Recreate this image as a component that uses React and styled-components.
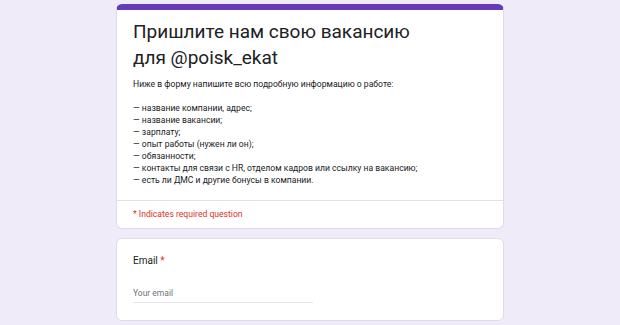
import React from 'react';
import styled, { createGlobalStyle } from 'styled-components';

const GlobalStyle = createGlobalStyle`
  html, body {
    margin: 0;
    padding: 0;
    background: #efebf8;
    font-family: Roboto, 'Noto Sans', Arial, sans-serif;
  }
`;

const Page = styled.div`
  display: flex;
  flex-direction: column;
  align-items: center;
  gap: 9px;
  padding-top: 4px;
`;

const Card = styled.div`
  width: 388px;
  background: #fff;
  border-radius: 6px;
  border: 1px solid #dfdce6;
  box-sizing: border-box;
  overflow: hidden;
  border-top: ${p => (p.$accent ? '6px solid #673ab7' : '1px solid #dfdce6')};
`;

const Header = styled.div`
  padding: 9px 16px 14px;
  border-bottom: 1px solid #e3e1e8;
`;

const Title = styled.h1`
  margin: 0 0 7px;
  font-size: 19px;
  font-weight: 400;
  line-height: 26px;
  color: #202124;
`;

const Description = styled.div`
  font-size: 8.6px;
  line-height: 12px;
  color: #202124;
  white-space: pre-line;
`;

const Required = styled.div`
  padding: 7px 16px 8px;
  font-size: 8.6px;
  line-height: 12px;
  color: #d93025;
`;

const Question = styled.div`
  padding: 15px 16px 17px;
`;

const Label = styled.div`
  font-size: 10px;
  line-height: 14px;
  color: #202124;
  span {
    color: #d93025;
  }
`;

const Input = styled.input`
  display: block;
  margin-top: 19px;
  width: 180px;
  border: none;
  border-bottom: 1px solid #e6e4ea;
  padding: 0 0 3px;
  font-family: inherit;
  font-size: 8.5px;
  line-height: 12px;
  color: #202124;
  outline: none;
  &::placeholder {
    color: #70757a;
  }
`;

const description = `Ниже в форму напишите всю подробную информацию о работе:

— название компании, адрес;
— название вакансии;
— зарплату;
— опыт работы (нужен ли он);
— обязанности;
— контакты для связи с HR, отделом кадров или ссылку на вакансию;
— есть ли ДМС и другие бонусы в компании.`;

export default function App() {
  return (
    <>
      <GlobalStyle />
      <Page>
        <Card $accent>
          <Header>
            <Title>
              Пришлите нам свою вакансию
              <br />
              для @poisk_ekat
            </Title>
            <Description>{description}</Description>
          </Header>
          <Required>* Indicates required question</Required>
        </Card>
        <Card>
          <Question>
            <Label>
              Email <span>*</span>
            </Label>
            <Input placeholder="Your email" />
          </Question>
        </Card>
      </Page>
    </>
  );
}
